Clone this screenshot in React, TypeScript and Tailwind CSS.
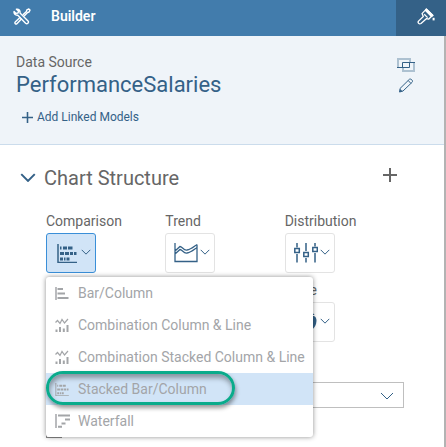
import React from "react";

type IconProps = { className?: string };

function ToolsIcon({ className }: IconProps) {
  return (
    <svg className={className} width="18" height="17" viewBox="0 0 18 17" fill="none" stroke="currentColor" strokeWidth="1.4" strokeLinecap="round" strokeLinejoin="round">
      <path d="M3.4 1.2 5.6 3.2 5 5 3 5.4 1.1 3.5C.6 5.8 2.3 7.6 4.8 7.2L12.6 15.2C14.2 16.6 16.4 14.6 15 12.9L7 5.1C7.5 2.6 5.8.7 3.4 1.2Z" />
      <path d="M10.2 6.6 13.4 3.4 13.9 1.8 15.8.9 17 2.1 16.1 4 14.6 4.5 11.4 7.7" />
      <path d="M7 9.6 2.2 14.1C1.3 15.2 2.8 16.6 3.9 15.7L8.4 11" />
    </svg>
  );
}

function BrushIcon() {
  return (
    <svg width="18" height="17" viewBox="0 0 18 17" fill="none" stroke="currentColor" strokeWidth="1.3" strokeLinejoin="round">
      <path d="M5 5.600 9.300 1.100 15.500 7.300 11.600 11.200 9.600 10.600 4 15.500C2.200 16.600.3 14.800 1.500 13.100L6.300 8.500Z" />
      <path d="M9.300 1 16 7.500 14.500 8.500 8.500 2.500Z" fill="currentColor" />
      <path d="M7.200 6.200 10.600 9.600" />
      <path d="M16.600 9.800v2.600" strokeWidth="2" />
    </svg>
  );
}

function OverlapIcon() {
  return (
    <svg width="18" height="14" viewBox="0 0 18 14" fill="none" stroke="#346187">
      <path d="M1 9V1h12v3M6 9v4h11V5" strokeWidth="2" opacity=".35" />
      <path d="M0 9.500h12.500V4M5.500 10V4.500H18" />
    </svg>
  );
}

function PencilIcon() {
  return (
    <svg width="14" height="15" viewBox="0 0 14 15" fill="none" stroke="#346187" strokeLinejoin="round">
      <path d="M1 10.500 10.500 1.200Q11.500.3 13.500 2.600 14 3.300 13.200 4.200L4 13 .6 14ZM9.200 2.500l2.700 2.900" />
      <path d="M.4 14.300 1.200 11 3.600 13.300Z" fill="#346187" stroke="none" />
    </svg>
  );
}

function PlusIcon({ className }: IconProps) {
  return (
    <svg className={className} viewBox="0 0 14 14" stroke="currentColor" strokeWidth="2" fill="none">
      <path d="M7 0v14M0 7h14" />
    </svg>
  );
}

function Chevron({ className }: IconProps) {
  return (
    <svg className={className} viewBox="0 0 14 8" fill="none" stroke="currentColor">
      <path d="M1 1l6 6 6-6" vectorEffect="non-scaling-stroke" />
    </svg>
  );
}

function StackedIcon({ className }: IconProps) {
  return (
    <svg className={className} viewBox="0 0 20 19" fill="none" stroke="currentColor">
      <path d="M1 0v18.500h19" strokeWidth="1.5" />
      <path d="M3 4h1.500M6 4h4M11 4h4.500M3 9.500h4M8 9.500h4M13 9.500h3M17 9.500h2.500M3 15h3M7 15h1.500M9.500 15h3" strokeWidth="3" />
    </svg>
  );
}

function TrendIcon() {
  return (
    <svg width="24" height="20" viewBox="0 0 24 20" fill="none" stroke="currentColor" strokeWidth="1.3">
      <path d="M1 0v18.500h22V1.500M1 8l5-4.500c2 0 4 4.500 7 3.500C17 6.500 20 3.500 23 1.500M1 11l5-4.500c2 0 4 4.500 7 3.500 4-.5 7-3.500 10-5.500" />
    </svg>
  );
}

function DistributionIcon() {
  return (
    <svg width="24" height="20" viewBox="0 0 24 20" fill="none" stroke="currentColor">
      <path d="M3 0v4.500M3 11v8.500M12 0v8M12 15v4.500M21 0v3.500M21 10v9.500" strokeWidth="1.5" />
      <path d="M.8 5.500h4.500v4H.8ZM9.800 9.500h4.500v4H9.800ZM18.800 4.500h4.500v4h-4.500Z" strokeWidth="1.5" />
    </svg>
  );
}

function PieIcon() {
  return (
    <svg width="23" height="20" viewBox="0 0 23 20" fill="currentColor">
      <path d="M9 4a7 7 0 1 0 6 12l-6-5Z" />
      <path d="M10 4H20Q22.500 5 22.500 9 22 15 18 17.500L10 12Z" />
      <path d="M16 1q4 0 4.500 2H16Z" />
    </svg>
  );
}

function BarIcon() {
  return (
    <svg width="14" height="13" viewBox="0 0 14 13" fill="none" stroke="currentColor">
      <path d="M1 0v13" strokeWidth="1.5" />
      <path d="M2.500 2H8M2.500 6.500H10M2.500 11H13.500" strokeWidth="2" />
    </svg>
  );
}

function ComboIcon() {
  return (
    <svg width="14" height="14" viewBox="0 0 14 14" fill="none" stroke="currentColor">
      <path d="M.5 4.500l2-2 2.500 3L7 1.500l2.500 3.500L13 1" strokeWidth="1.2" />
      <path d="M1.500 14v-2.500M5 14V9M8.800 14v-3.500M12.500 14V7" strokeWidth="2" />
    </svg>
  );
}

function WaterfallIcon() {
  return (
    <svg width="15" height="14" viewBox="0 0 15 14" fill="none" stroke="currentColor">
      <path d="M1 0v14" strokeWidth="1.5" />
      <path d="M3 1.500h12M10 5.500h5M6.500 9.500h4M3 12.800h4" strokeWidth="2" />
    </svg>
  );
}

type ChartKindProps = {
  id: string;
  label: string;
  icon: React.ReactNode;
  selected?: boolean;
  className?: string;
  children?: React.ReactNode;
};

function ChartKind({ id, label, icon, selected, className = "", children }: ChartKindProps) {
  return (
    <div className={`relative ${className}`}>
      <label htmlFor={id} className="block text-sm leading-5 text-[#666]">{label}</label>
      <button
        id={id}
        type="button"
        aria-haspopup="menu"
        aria-expanded={!!selected}
        className={`mt-0.5 flex h-10 w-[50px] items-center justify-between rounded-[3px] border pr-1 text-[#346187] ${selected ? "border-[#3a8fd8] bg-[#d1e4f7] pl-2.5" : "border-[#e3e3e3] bg-white pl-2"}`}
      >
        {icon}
        <Chevron className="mb-0.5 h-1.5 w-2.5" />
      </button>
      {children}
    </div>
  );
}

const menuItems = [
  { label: "Bar/Column", icon: <BarIcon /> },
  { label: "Combination Column & Line", icon: <ComboIcon /> },
  { label: "Combination Stacked Column & Line", icon: <ComboIcon /> },
  { label: "Stacked Bar/Column", icon: <StackedIcon className="h-[13px] w-3.5" />, current: true },
  { label: "Waterfall", icon: <WaterfallIcon /> },
];

function ChartMenu() {
  return (
    <div role="menu" className="absolute top-full left-0 z-10 mt-1 w-[267px] rounded-[3px] bg-white shadow-[0_0_5px_rgba(0,0,0,0.45)]">
      {menuItems.map((item) => (
        <button
          key={item.label}
          type="button"
          role="menuitem"
          className={`relative flex h-8 w-full items-center text-left text-sm whitespace-nowrap text-[#a3a5a8] ${item.current ? "bg-[#d1e4f7]" : ""}`}
        >
          <span className="flex w-8 shrink-0 pl-[9px]">{item.icon}</span>
          {item.label}
          {item.current && (
            <span className="absolute -top-0.5 left-0 h-[34px] w-[189px] rounded-full border-[3px] border-[#0aab8b] shadow-[1px_3px_4px_rgba(0,0,0,0.4),inset_1px_4px_5px_rgba(0,0,0,0.35)]" />
          )}
        </button>
      ))}
    </div>
  );
}

export default function App() {
  return (
    <div className="flex min-h-screen flex-col bg-white font-['Roboto','Liberation_Sans',sans-serif]">
      <header className="flex h-9 items-stretch bg-[#427cac] text-white">
        <div className="flex flex-1 items-center gap-5 pb-1 pl-[13px]">
          <ToolsIcon />
          <h1 className="text-sm font-semibold">Builder</h1>
        </div>
        <button type="button" aria-label="Styling" className="flex w-[50px] items-center justify-center bg-[#346187] pb-1 pl-2.5">
          <BrushIcon />
        </button>
      </header>

      <div className="flex-1 border-r-2 border-[#b3b3b3]">
        <section className="flex h-[109px] justify-between border-b border-[#cbdcec] bg-[#eff4f9] pt-4 pr-7">
          <div className="pl-4">
            <p className="text-sm leading-5 text-[#666]">Data Source</p>
            <h2 className="text-[22px] leading-[26px] text-[#346187]">PerformanceSalaries</h2>
            <button type="button" className="mt-[9px] flex items-center gap-1 pl-1.5 text-xs leading-5 text-[#346187]">
              <PlusIcon className="size-[11px]" />
              Add Linked Models
            </button>
          </div>
          <div className="flex flex-col items-center gap-1.5 pt-1.5 pr-px">
            <button type="button" aria-label="Change model"><OverlapIcon /></button>
            <button type="button" aria-label="Edit model"><PencilIcon /></button>
          </div>
        </section>

        <main className="pr-10 pl-[46px]">
          <div className="-ml-[26px] flex items-start justify-between pt-[19px] pr-[7px]">
            <h2 className="text-xl leading-7 text-[#666]">
              <button type="button" aria-expanded="true" className="flex items-center gap-2">
                <Chevron className="mb-0.5 h-[9px] w-4 stroke-2 text-[#346187]" />
                Chart Structure
              </button>
            </h2>
            <button type="button" aria-label="Add" className="pt-1 text-[#666]">
              <PlusIcon className="block size-3.5" />
            </button>
          </div>

          <div className="mt-[19px] grid grid-cols-3 gap-y-[7px]">
            <ChartKind
              id="comparison"
              label="Comparison"
              selected
              icon={<StackedIcon className="h-[19px] w-5" />}
            >
              <ChartMenu />
            </ChartKind>
            <ChartKind id="trend" label="Trend" icon={<TrendIcon />} />
            <ChartKind id="distribution" label="Distribution" icon={<DistributionIcon />} />
            <ChartKind id="more" label="More" icon={<PieIcon />} className="col-start-3" />
          </div>

          <div className="relative mt-10">
            <select aria-label="Chart orientation" className="block h-[26px] w-full appearance-none border border-[#bfbfbf] bg-white text-sm" />
            <Chevron className="pointer-events-none absolute top-2.5 right-2.5 h-2 w-3.5 text-[#346187]" />
          </div>

          <input type="checkbox" aria-label="Show totals" className="mt-3.5 block size-4 appearance-none border border-[#8c8c8c] bg-white" />
        </main>
      </div>
    </div>
  );
}
